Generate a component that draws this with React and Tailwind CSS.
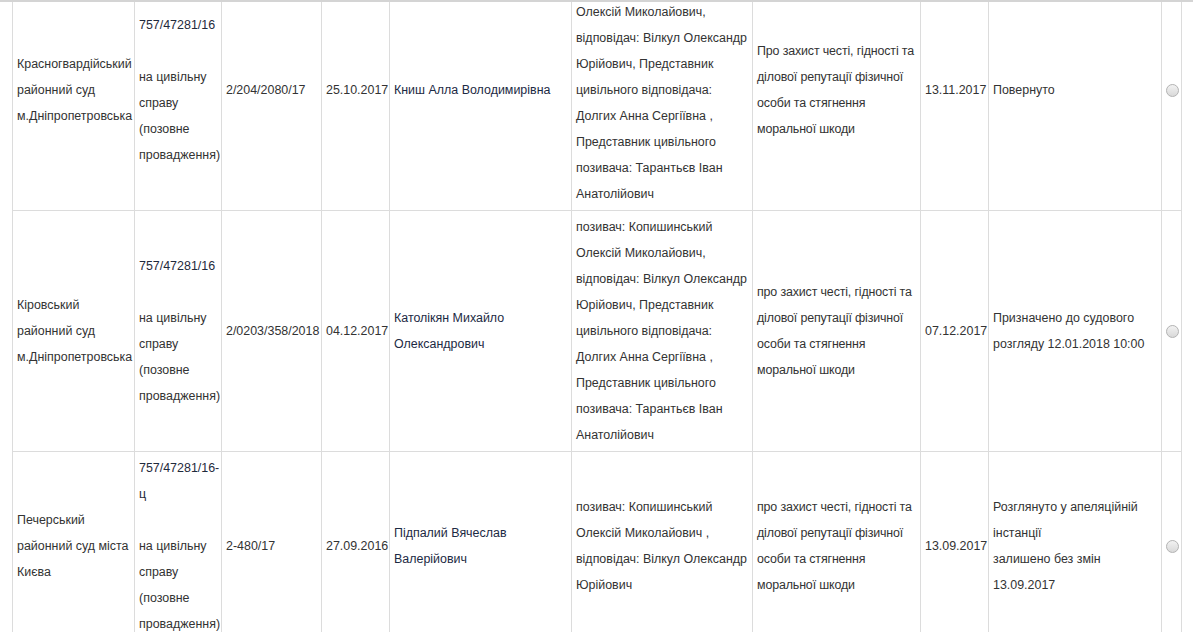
import React from 'react';

const rows = [
  {
    court: ['Красногвардійський', 'районний суд', 'м.Дніпропетровська'],
    caseNo: '757/47281/16',
    num: '2/204/2080/17',
    date: '25.10.2017',
    judge: 'Книш Алла Володимирівна',
    parties:
      'позивач: Копишинський Олексій Миколайович, відповідач: Вілкул Олександр Юрійович, Представник цивільного відповідача: Долгих Анна Сергіївна , Представник цивільного позивача: Тарантьєв Іван Анатолійович',
    subject: 'Про захист честі, гідності та ділової репутації фізичної особи та стягнення моральної шкоди',
    decided: '13.11.2017',
    status: ['Повернуто'],
  },
  {
    court: ['Кіровський', 'районний суд', 'м.Дніпропетровська'],
    caseNo: '757/47281/16',
    num: '2/0203/358/2018',
    date: '04.12.2017',
    judge: 'Католікян Михайло Олександрович',
    parties:
      'позивач: Копишинський Олексій Миколайович, відповідач: Вілкул Олександр Юрійович, Представник цивільного відповідача: Долгих Анна Сергіївна , Представник цивільного позивача: Тарантьєв Іван Анатолійович',
    subject: 'про захист честі, гідності та ділової репутації фізичної особи та стягнення моральної шкоди',
    decided: '07.12.2017',
    status: ['Призначено до судового розгляду 12.01.2018 10:00'],
  },
  {
    court: ['Печерський', 'районний суд міста', 'Києва'],
    caseNo: '757/47281/16-ц',
    num: '2-480/17',
    date: '27.09.2016',
    judge: 'Підпалий Вячеслав Валерійович',
    parties: 'позивач: Копишинський Олексій Миколайович , відповідач: Вілкул Олександр Юрійович',
    subject: 'про захист честі, гідності та ділової репутації фізичної особи та стягнення моральної шкоди',
    decided: '13.09.2017',
    status: ['Розглянуто у апеляційній інстанції', 'залишено без змін', '13.09.2017'],
  },
];

const td = 'border border-[#dcdcdc] px-[4px] py-[3px] align-middle';

export default function App() {
  return (
    <div className="w-[1193px] h-[632px] overflow-hidden bg-white border-t-2 border-[#d4d4d4] font-['Liberation_Sans',Arial,sans-serif] text-[12.45px] leading-[26px] text-[#333]">
      <div className="pl-[12px] -mt-[33px]">
        <table className="table-fixed border-collapse w-[1169px]">
          <colgroup>
            <col className="w-[122px]" />
            <col className="w-[87px]" />
            <col className="w-[100px]" />
            <col className="w-[68px]" />
            <col className="w-[182px]" />
            <col className="w-[181px]" />
            <col className="w-[168px]" />
            <col className="w-[68px]" />
            <col className="w-[173px]" />
            <col className="w-[20px]" />
          </colgroup>
          <tbody>
            {rows.map((r, i) => (
              <tr key={i}>
                <td className={td}>
                  {r.court.map((c, j) => (
                    <div key={j} className="whitespace-nowrap">{c}</div>
                  ))}
                </td>
                <td className={td}>
                  <div className="text-[#1f2a3c]">{r.caseNo}</div>
                  <div>&nbsp;</div>
                  <div>на цивільну справу (позовне провадження)</div>
                </td>
                <td className={`${td} whitespace-nowrap`}>{r.num}</td>
                <td className={`${td} whitespace-nowrap`}>{r.date}</td>
                <td className={`${td} text-[#1c2a44]`}>{r.judge}</td>
                <td className={td}>{r.parties}</td>
                <td className={`${td} pr-0 tracking-[-0.15px]`}>{r.subject}</td>
                <td className={`${td} whitespace-nowrap`}>{r.decided}</td>
                <td className={td}>
                  {r.status.map((s, j) => (
                    <div key={j}>{s}</div>
                  ))}
                </td>
                <td className={`${td} px-0`}>
                  <div className="mx-auto w-[13px] h-[13px] rounded-full border border-[#b4b4b4] bg-gradient-to-b from-[#f2f2f2] to-[#d9d9d9]" />
                </td>
              </tr>
            ))}
          </tbody>
        </table>
      </div>
    </div>
  );
}
